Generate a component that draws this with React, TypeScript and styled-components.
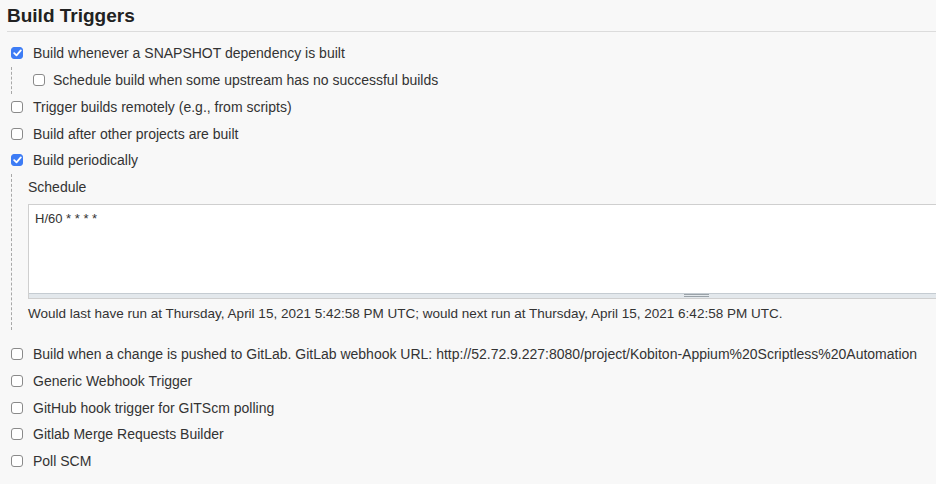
import React from "react";
import styled, { createGlobalStyle } from "styled-components";

const Global = createGlobalStyle`
  html, body { margin: 0; padding: 0; background: #f8f8f8; }
  body { font-family: "Liberation Sans", Arial, Helvetica, sans-serif; color: #333; overflow: hidden; }
`;

const Page = styled.div`
  width: 936px;
  height: 484px;
  overflow: hidden;
  background: #f8f8f8;
`;

const Heading = styled.h2`
  margin: 0 0 0 7px;
  padding: 5px 0 5px;
  height: 21px;
  font-size: 19px;
  line-height: 22px;
  font-weight: bold;
  color: #222;
  border-bottom: 1px solid #dcdcdc;
`;

const Body = styled.div`
  padding-top: 8px;
`;

const Row = styled.label<{ $indent?: number }>`
  display: flex;
  align-items: center;
  height: 26.75px;
  padding-left: ${(p) => 11 + (p.$indent ?? 0)}px;
  font-size: 14px;
  color: #333;
  white-space: nowrap;
`;

const Box = styled.span<{ $checked?: boolean; $gap?: number }>`
  box-sizing: border-box;
  width: 12px;
  height: 12px;
  margin-right: ${(p) => p.$gap ?? 10}px;
  border-radius: 3px;
  flex: none;
  display: flex;
  align-items: center;
  justify-content: center;
  background: ${(p) => (p.$checked ? "#3d7cf5" : "#fff")};
  border: 1px solid ${(p) => (p.$checked ? "#3d7cf5" : "#8a8a8a")};
`;

const Nested = styled.div`
  margin-left: 11px;
  border-left: 1px dashed #a8a8a8;
`;

const FieldLabel = styled.div`
  height: 26px;
  display: flex;
  align-items: center;
  padding-left: 16px;
  font-size: 14px;
  color: #333;
`;

const AreaWrap = styled.div`
  margin: 4px 0 0 16px;
  width: 1335px;
  box-sizing: border-box;
  border: 1px solid #cfcfcf;
  border-right: none;
  background: #fff;
`;

const Area = styled.div`
  height: 82px;
  padding: 6px 0 0 6px;
  font-size: 13px;
  color: #333;
`;

const Grip = styled.div`
  height: 4px;
  border-top: 1px solid #c5ccd2;
  background: #e3e8ec;
  display: flex;
  justify-content: center;
  align-items: center;
`;

const GripLines = styled.span`
  width: 25px;
  height: 3px;
  border-top: 1px solid #9aa2a8;
  border-bottom: 1px solid #9aa2a8;
  box-sizing: border-box;
`;

const Help = styled.div`
  padding: 7px 0 9px 16px;
  font-size: 13.5px;
  color: #333;
  white-space: nowrap;
`;

const Spacer = styled.div`
  height: 11px;
`;

const Check = () => (
  <svg width="9" height="8" viewBox="0 0 9 8">
    <path d="M1.2 4.2 L3.5 6.4 L7.8 1.4" fill="none" stroke="#fff" strokeWidth="1.8" strokeLinecap="round" strokeLinejoin="round" />
  </svg>
);

const Item = ({ label, checked, indent, gap }: { label: string; checked?: boolean; indent?: number; gap?: number }) => (
  <Row $indent={indent}>
    <Box $checked={checked} $gap={gap}>{checked && <Check />}</Box>
    {label}
  </Row>
);

export default function App() {
  return (
    <Page>
      <Global />
      <Heading>Build Triggers</Heading>
      <Body>
        <Item checked label="Build whenever a SNAPSHOT dependency is built" />
        <Nested>
          <Item indent={10} gap={8} label="Schedule build when some upstream has no successful builds" />
        </Nested>
        <Item label="Trigger builds remotely (e.g., from scripts)" />
        <Item label="Build after other projects are built" />
        <Item checked label="Build periodically" />
        <Nested>
          <FieldLabel>Schedule</FieldLabel>
          <AreaWrap>
            <Area>H/60 * * * *</Area>
            <Grip>
              <GripLines />
            </Grip>
          </AreaWrap>
          <Help>
            Would last have run at Thursday, April 15, 2021 5:42:58 PM UTC; would next run at Thursday, April 15, 2021 6:42:58 PM UTC.
          </Help>
        </Nested>
        <Spacer />
        <Item label="Build when a change is pushed to GitLab. GitLab webhook URL: http://52.72.9.227:8080/project/Kobiton-Appium%20Scriptless%20Automation" />
        <Item label="Generic Webhook Trigger" />
        <Item label="GitHub hook trigger for GITScm polling" />
        <Item label="Gitlab Merge Requests Builder" />
        <Item label="Poll SCM" />
      </Body>
    </Page>
  );
}
